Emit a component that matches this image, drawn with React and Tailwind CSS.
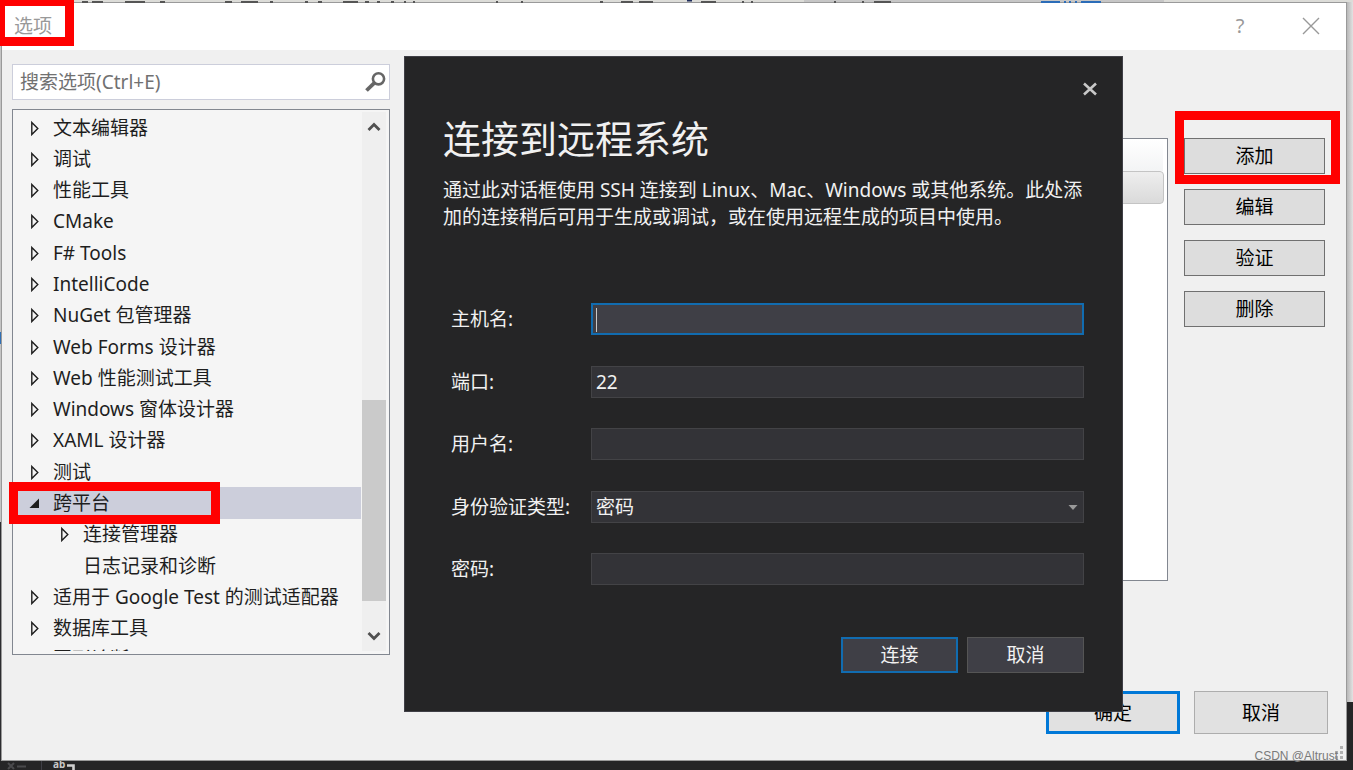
import React from "react";

const treeItems = [
  { label: "文本编辑器", state: "closed" },
  { label: "调试", state: "closed" },
  { label: "性能工具", state: "closed" },
  { label: "CMake", state: "closed" },
  { label: "F# Tools", state: "closed" },
  { label: "IntelliCode", state: "closed" },
  { label: "NuGet 包管理器", state: "closed" },
  { label: "Web Forms 设计器", state: "closed" },
  { label: "Web 性能测试工具", state: "closed" },
  { label: "Windows 窗体设计器", state: "closed" },
  { label: "XAML 设计器", state: "closed" },
  { label: "测试", state: "closed" },
  { label: "跨平台", state: "open", selected: true },
  { label: "连接管理器", state: "closed", child: true },
  { label: "日志记录和诊断", state: "leaf", child: true },
  { label: "适用于 Google Test 的测试适配器", state: "closed" },
  { label: "数据库工具", state: "closed" },
  { label: "图形诊断", state: "closed" },
];

const sideButtons = ["添加", "编辑", "验证", "删除"];

const fieldClass =
  "w-full h-8 px-1 rounded-none border border-[#434346] bg-[#333337] text-[#f1f1f1] outline-none";

const TreeArrow = ({ state }) => (
  <svg width="12" height="16" viewBox="0 0 12 16" className="shrink-0" aria-hidden="true">
    {state === "closed" && (
      <path d="M2.8 2.5 L8.8 8.5 L2.8 14.5 Z" fill="none" stroke="#1e1e1e" strokeWidth="1.4" />
    )}
    {state === "open" && <path d="M10 3.5 L10 13 L0.5 13 Z" fill="#1e1e1e" />}
  </svg>
);

const TreeItem = ({ item }) => (
  <li
    className={`flex-1 flex items-center gap-3 whitespace-nowrap ${
      item.child ? "pl-11" : "pl-[14px]"
    } ${item.selected ? "bg-[#cccedb]" : ""}`}
  >
    <TreeArrow state={item.state} />
    <span>{item.label}</span>
  </li>
);

const ScrollButton = ({ label, d }) => (
  <button aria-label={label} className="h-[30px] shrink-0 flex items-center justify-center">
    <svg width="14" height="10" viewBox="0 0 14 10" aria-hidden="true">
      <path d={d} fill="none" stroke="#505050" strokeWidth="2.8" />
    </svg>
  </button>
);

const OptionsTree = () => (
  <div className="h-[546px] p-[2px] pb-[3px] flex border border-[#828790] bg-[#f5f5f5]">
    <div className="flex-1 flex overflow-hidden">
      <ul className="flex-1 h-[563px] mr-px flex flex-col text-[#1e1e1e]">
        {treeItems.map((item) => (
          <TreeItem key={item.label} item={item} />
        ))}
      </ul>
      <div className="w-6 h-full mr-px flex flex-col bg-[#efefef]">
        <ScrollButton label="向上滚动" d="M1.5 8 L7 2.5 L12.5 8" />
        <div className="flex-1">
          <div className="mt-[258px] h-[201px] bg-[#cacaca]" />
        </div>
        <ScrollButton label="向下滚动" d="M1.5 2 L7 7.5 L12.5 2" />
      </div>
    </div>
  </div>
);

const SearchBox = () => (
  <div className="h-9 flex items-center pl-[7px] pr-[3px] border border-[#cccedb] bg-white">
    <input
      type="text"
      aria-label="搜索选项"
      placeholder="搜索选项(Ctrl+E)"
      className="flex-1 min-w-0 bg-transparent outline-none placeholder:text-[#717171]"
    />
    <svg width="22" height="22" viewBox="0 0 22 22" aria-hidden="true">
      <circle cx="14.5" cy="7.8" r="5.6" fill="none" stroke="#666" strokeWidth="2.6" />
      <path d="M10.4 11.8 L2.5 19.5" stroke="#666" strokeWidth="3.8" />
    </svg>
  </div>
);

const TitleBar = () => (
  <header className="h-[47px] shrink-0 flex items-center pb-[2px] pl-3 pr-[25px] bg-white text-[#999]">
    <h1 className="flex-1">选项</h1>
    <button aria-label="帮助" className="w-6 mr-[49px] text-xl">?</button>
    <button aria-label="关闭" className="w-5 flex justify-center">
      <svg width="18" height="18" viewBox="0 0 18 18" aria-hidden="true">
        <path d="M1 1 L17 17 M17 1 L1 17" stroke="#999" strokeWidth="1.4" />
      </svg>
    </button>
  </header>
);

const FormRow = ({ id, label, children }) => (
  <div className="flex items-center">
    <label htmlFor={id} className="w-[140px] shrink-0">{label}</label>
    <div className="flex-1 relative">{children}</div>
  </div>
);

const ConnectDialog = () => (
  <section
    role="dialog"
    aria-labelledby="connect-title"
    className="absolute top-[56px] left-[404px] right-[230px] h-[656px] pl-[38px] pr-[38px] border border-[#3f3f46] bg-[#252526] text-[#f1f1f1]"
  >
    <div className="h-[51px] -mr-[14px] flex justify-end pt-6">
      <button aria-label="关闭" className="w-4 h-4 flex items-center justify-center">
        <svg width="14" height="14" viewBox="0 0 14 14" aria-hidden="true">
          <path d="M1 1.5 L13 12.5 M13 1.5 L1 12.5" stroke="#c8c8c8" strokeWidth="2.6" />
        </svg>
      </button>
    </div>
    <h2 id="connect-title" className="text-[38px] leading-[60px]">连接到远程系统</h2>
    <p className="mt-[9px] leading-[27px] whitespace-nowrap">
      通过此对话框使用 SSH 连接到 Linux、Mac、Windows 或其他系统。此处添
      <br />
      加的连接稍后可用于生成或调试，或在使用远程生成的项目中使用。
    </p>

    <form className="mt-[72px] pl-2" onSubmit={(e) => e.preventDefault()}>
      <div className="h-[282px] flex flex-col justify-between">
        <FormRow id="host" label="主机名:">
          <input
            id="host"
            type="text"
            className="block w-full h-8 px-1 border-2 border-[#116cb0] bg-[#3f3f46] outline-none"
          />
          {/* text caret */}
          <span className="absolute left-[5px] top-[5px] w-px h-6 bg-[#c8c8c8]" />
        </FormRow>
        <FormRow id="port" label="端口:">
          <input id="port" type="text" defaultValue="22" className={fieldClass} />
        </FormRow>
        <FormRow id="user" label="用户名:">
          <input id="user" type="text" className={fieldClass} />
        </FormRow>
        <FormRow id="auth" label="身份验证类型:">
          <select id="auth" className={`${fieldClass} appearance-none`}>
            <option>密码</option>
          </select>
          <svg
            width="10"
            height="6"
            viewBox="0 0 10 6"
            className="absolute right-[6px] top-[14px] pointer-events-none"
            aria-hidden="true"
          >
            <path d="M0.5 0 L9.5 0 L5 5 Z" fill="#999" />
          </svg>
        </FormRow>
        <FormRow id="password" label="密码:">
          <input id="password" type="password" className={fieldClass} />
        </FormRow>
      </div>
      <div className="mt-[52px] flex justify-end gap-[9px]">
        <button type="submit" className="w-[117px] h-9 border-2 border-[#116cb0] bg-[#3f3f46]">
          连接
        </button>
        <button type="button" className="w-[117px] h-9 border border-[#555555] bg-[#3f3f46]">
          取消
        </button>
      </div>
    </form>
  </section>
);

// Sliver of the editor that shows above the window
const EditorTop = () => (
  <div className="h-[2px] shrink-0 bg-[#dcdcd8]">
    <svg width="1353" height="3" viewBox="0 0 1353 3" className="relative block" aria-hidden="true">
      <rect x="804" width="360" height="2" fill="#c6c6c6" />
      <path
        d="M82 2H88M92 2H103M125 2H145M160 2H165M225 2H232M241 2H258M270 2H273M305 2H308M318 2H322M343 2H358M365 2H369M377 2H380M391 2H394M404 2H406M413 2H415M496 2H498M521 2H523M600 2H603M621 2H633M639 2H653M701 2H716M742 2H744M751 2H753M834 2H836M862 2H864M874 2H891"
        stroke="#555"
        strokeWidth="2"
      />
      <path d="M687 0H692" stroke="#1e2c5c" strokeWidth="3" />
      <path d="M1041 2H1060M1064 2H1066M1069 2H1071M1075 2H1077M1081 2H1101" stroke="#2b6cb8" strokeWidth="2" />
    </svg>
  </div>
);

// Sliver of the editor toolbar below the window
const EditorBottom = () => (
  <div className="h-[9px] shrink-0 flex overflow-hidden pl-[6px]">
    <svg width="35" height="9" viewBox="0 0 35 9" aria-hidden="true">
      <path d="M2 2 L8 8 M8 2 L2 8 M11 5.5 H20" stroke="#4a4a4c" strokeWidth="2" />
    </svg>
    <span className="w-3 border-l border-[#3f3f46]" />
    <span className="text-[10px] leading-[7px] font-bold text-[#c8c8c8]">ab</span>
    <svg width="12" height="9" viewBox="0 0 12 9" aria-hidden="true">
      <path d="M2 4.5 H8.5 V9" fill="none" stroke="#d0d0d0" strokeWidth="2.6" />
    </svg>
  </div>
);

const App = () => {
  return (
    <div className="relative min-h-screen overflow-hidden flex flex-col bg-[#252526] text-[19px] leading-6 text-black font-['Noto_Sans','Noto_Sans_CJK_SC',sans-serif]">
      <EditorTop />

      <div className="flex-1 flex">
        <div className="w-px flex flex-col bg-[#c4c4c4]">
          <div className="mt-[330px] h-3 bg-[#2f6fb5]" />
          <div className="mt-[178px] flex-1 bg-[#2d2d30]" />
        </div>

        <main className="flex-1 min-w-0 flex flex-col border border-[#9a9a9a] bg-[#f0f0f0]">
          <TitleBar />

          <div className="flex items-start pt-[14px] pl-[10px] pr-[21px]">
            <div className="w-[378px] shrink-0 flex flex-col gap-[9px]">
              <SearchBox />
              <OptionsTree />
            </div>

            {/* connections list */}
            <div className="flex-1 h-[443px] mt-[74px] ml-[14px] pr-[3px] border border-[#828790] bg-white">
              <div className="h-8 mr-px bg-linear-to-b from-white to-[#f3f4f5]" />
              <div className="h-[33px] rounded border border-[#c4c4c4] bg-linear-to-b from-[#eeeeee] to-[#dadada]" />
            </div>

            <div className="w-[141px] shrink-0 mt-[74px] ml-4 flex flex-col gap-[15px]">
              {sideButtons.map((label) => (
                <button key={label} className="h-9 border border-[#707070] bg-[#dddddd]">
                  {label}
                </button>
              ))}
            </div>
          </div>

          <footer className="flex justify-end gap-[14px] pt-9 pr-[18px]">
            <button className="w-[134px] h-[43px] border-[3px] border-[#0078d7] bg-[#e1e1e1]">
              确定
            </button>
            <button className="w-[134px] h-[43px] border border-[#adadad] bg-[#e1e1e1]">
              取消
            </button>
          </footer>
        </main>

        <div className="w-[6px] flex flex-col">
          <div className="flex-1 bg-linear-to-r from-[#b8b8b8] to-[#e2e2e2]" />
          <div className="h-[59px] bg-[#252526]" />
        </div>
      </div>

      <EditorBottom />

      <ConnectDialog />

      {/* resize grip */}
      <svg
        width="12"
        height="14"
        viewBox="0 0 12 14"
        className="absolute right-[9px] bottom-[11px]"
        aria-hidden="true"
      >
        <path
          d="M8 1h3v3h-3zM8 6h3v3h-3zM8 11h3v3h-3zM3 6h3v3h-3zM3 11h3v3h-3z"
          fill="#b0b0b0"
        />
      </svg>
      <span className="absolute right-[15px] bottom-[2px] text-xs leading-6 text-[#7a7a7a] font-['Liberation_Sans',sans-serif]">
        CSDN @Altrust
      </span>

      {/* red callouts */}
      <div className="absolute -left-[4px] -top-[3px] w-[78px] h-[49px] border-[9px] border-[#ff0000] pointer-events-none" />
      <div className="absolute left-[9px] top-[482px] w-[211px] h-[42px] border-[9px] border-[#ff0000] pointer-events-none" />
      <div className="absolute right-[13px] top-[111px] w-[165px] h-[73px] border-[9px] border-[#ff0000] pointer-events-none" />
    </div>
  );
};

export default App;
